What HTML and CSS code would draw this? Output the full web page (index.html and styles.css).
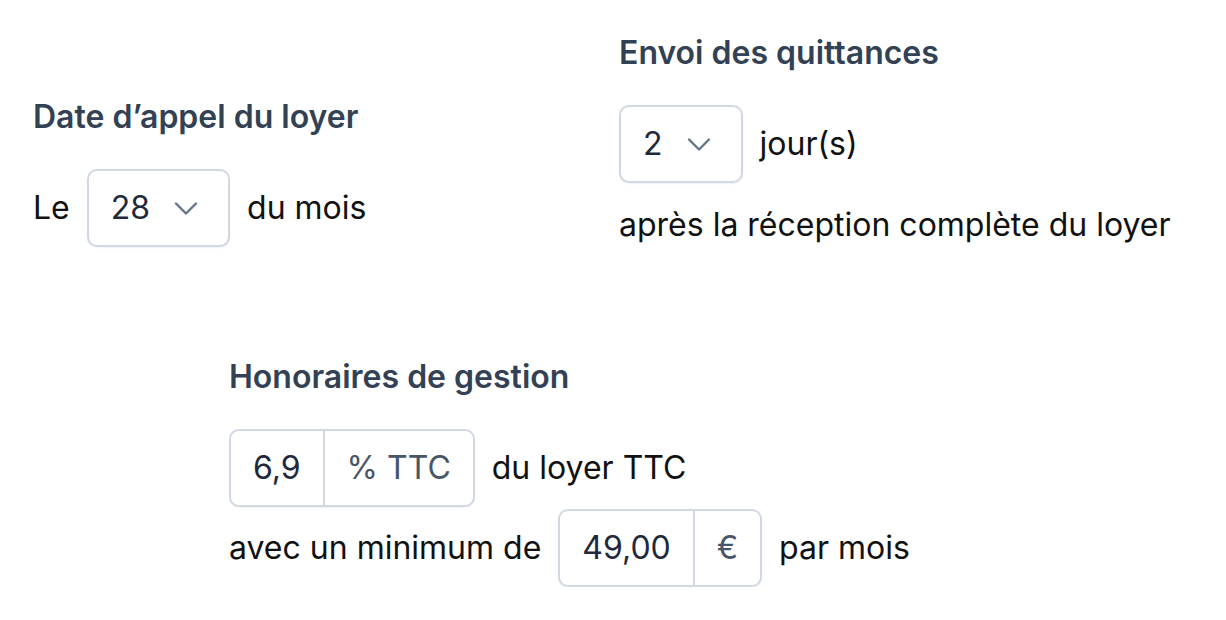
FILE: index.html
```html
<!DOCTYPE html>
<html lang="fr">
<head>
    <meta charset="UTF-8">
    <title>Paramètres de gestion</title>
    <link rel="stylesheet" href="styles.css">
</head>
<body>
    <div class="settings">
        <div class="settings-row">
            <section class="setting rent-call">
                <h2 class="setting-title">Date d’appel du loyer</h2>
                <div class="line">
                    <span>Le</span>
                    <div class="select">
                        <span class="select-value">28</span>
                        <svg class="chevron" viewBox="0 0 24 24" width="24" height="24"><path d="M2 7.5l10 10 10-10" fill="none" stroke="currentColor" stroke-width="2.4" stroke-linecap="round" stroke-linejoin="round"/></svg>
                    </div>
                    <span>du mois</span>
                </div>
            </section>

            <section class="setting receipts">
                <h2 class="setting-title">Envoi des quittances</h2>
                <div class="line">
                    <div class="select">
                        <span class="select-value">2</span>
                        <svg class="chevron" viewBox="0 0 24 24" width="24" height="24"><path d="M2 7.5l10 10 10-10" fill="none" stroke="currentColor" stroke-width="2.4" stroke-linecap="round" stroke-linejoin="round"/></svg>
                    </div>
                    <span>jour(s)</span>
                </div>
                <p class="line-text">après la réception complète du loyer</p>
            </section>
        </div>

        <section class="setting fees">
            <h2 class="setting-title">Honoraires de gestion</h2>
            <div class="line">
                <div class="input-group">
                    <span class="input-value">6,9</span>
                    <span class="input-suffix">% TTC</span>
                </div>
                <span>du loyer TTC</span>
            </div>
            <div class="line line-tight">
                <span>avec un minimum de</span>
                <div class="input-group">
                    <span class="input-value">49,00</span>
                    <span class="input-suffix">€</span>
                </div>
                <span>par mois</span>
            </div>
        </section>
    </div>
</body>
</html>
```

FILE: styles.css
```css
html {
    background: #ffffff;
}

body {
    margin: 0;
    font-family: "Inter", "Noto Sans", sans-serif;
    font-size: 32px;
    line-height: 40px;
    color: #111111;
}

.settings {
    padding: 31px 0 0 33px;
}

.settings-row {
    display: flex;
    align-items: flex-end;
}

.rent-call {
    width: 586px;
}

.setting-title {
    margin: 0;
    font-size: 32px;
    line-height: 44px;
    font-weight: 600;
    color: #334155;
}

.line {
    display: flex;
    align-items: center;
    gap: 17px;
    margin-top: 30px;
}

.line-tight {
    margin-top: 2px;
}

.line-text {
    margin: 20px 0 0 0;
    line-height: 44px;
}

.select {
    display: flex;
    align-items: center;
    gap: 24px;
    padding: 17px 30px 17px 22px;
    border: 2px solid #cfd8e3;
    border-radius: 10px;
    box-shadow: 0 1px 2px rgba(15, 23, 42, 0.06);
    color: #1e293b;
}

.chevron {
    color: #64748b;
}

.fees {
    margin: 108px 0 0 196px;
}

.input-group {
    display: flex;
    border: 2px solid #cfd8e3;
    border-radius: 10px;
    box-shadow: 0 1px 2px rgba(15, 23, 42, 0.06);
}

.input-value {
    padding: 17px 22px;
    color: #1e293b;
}

.input-suffix {
    padding: 17px 22px;
    border-left: 2px solid #cfd8e3;
    color: #475569;
}
```
